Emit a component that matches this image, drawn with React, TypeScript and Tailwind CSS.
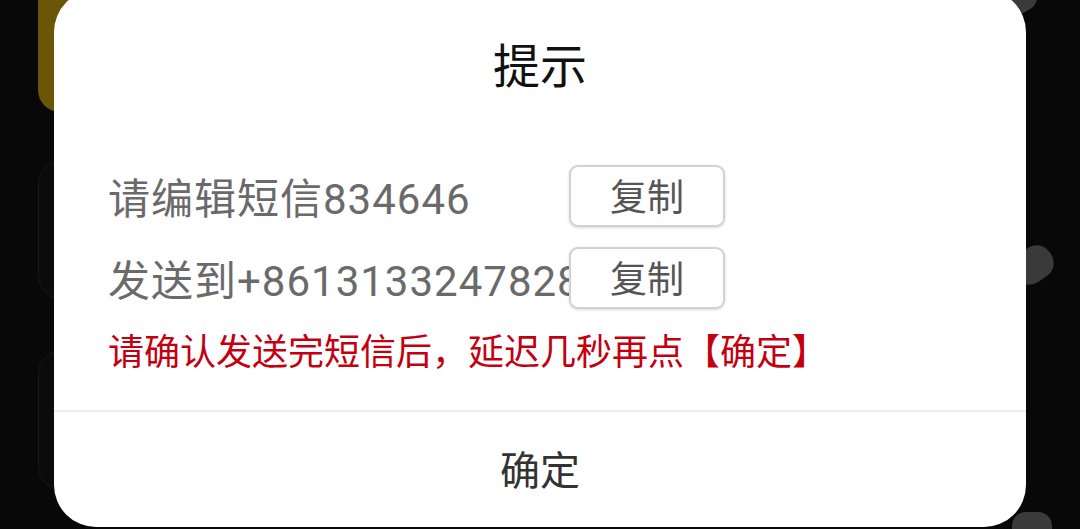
import { useState } from 'react'

const phone = '+8613133247828'
const code = '834646'

export default function App() {
  const [copied, setCopied] = useState<string | null>(null)

  const rows = [
    { label: `请编辑短信${code}`, value: code },
    { label: `发送到${phone}`, value: phone },
  ]

  return (
    <div
      className="relative w-[1080px] h-[529px] overflow-hidden bg-[#080808]"
      style={{ fontFamily: 'Roboto, "Noto Sans CJK SC", "Noto Sans", sans-serif' }}
    >
      {/* blurred app content behind the modal */}
      <div className="absolute left-[38px] top-[-40px] w-[200px] h-[152px] rounded-[22px] bg-[#6b5607]" />
      <div className="absolute left-[38px] top-[160px] w-[200px] h-[140px] rounded-[24px] border border-[#181818] bg-[#0b0b0b]" />
      <div className="absolute left-[38px] top-[350px] w-[200px] h-[140px] rounded-[24px] border border-[#181818] bg-[#0b0b0b]" />
      <div className="absolute left-[990px] top-[-14px] w-[48px] h-[30px] rounded-[14px] bg-[#3a3a3a] rotate-[-30deg]" />
      <div className="absolute left-[1012px] top-[248px] w-[42px] h-[34px] rounded-[16px] bg-[#3a3a3a] rotate-[-35deg]" />
      <div className="absolute left-[1012px] top-[512px] w-[40px] h-[30px] rounded-[14px] bg-[#3a3a3a]" />

      {/* dialog */}
      <div className="absolute left-[54px] top-[-10px] w-[972px] h-[537px] rounded-[42px] bg-white flex flex-col">
        <div className="pt-[49px] text-center text-[47px] leading-[56px] text-[#111111]">提示</div>

        <div className="mt-[70px] pl-[54px] flex flex-col gap-[20px]">
          {rows.map((row) => (
            <div key={row.value} className="flex items-center">
              {/* long number runs under the button, like the app does */}
              <div className="w-[461px] h-[62px] whitespace-nowrap text-[42px] tracking-[1px] leading-[70px] text-[#6a6a6a]">
                {row.label}
              </div>
              <button
                onClick={() => setCopied(row.value)}
                className="relative z-10 w-[156px] h-[62px] pt-[5px] rounded-[9px] border-2 border-[#d2d2d2] bg-white shadow-[0_1px_3px_rgba(0,0,0,0.15)] text-[37px] leading-none text-[#555555]"
              >
                {copied === row.value ? '复制' : '复制'}
              </button>
            </div>
          ))}
        </div>

        <div className="mt-[22px] pl-[54px] text-[36px] leading-[44px] text-[#c40010] whitespace-nowrap">
          请确认发送完短信后，延迟几秒再点【确定】
        </div>

        <div className="mt-[35px] h-[2px] bg-[#eeeeee]" />

        <button className="flex-1 pt-[4px] flex items-center justify-center text-[40px] text-[#333333]">确定</button>
      </div>
    </div>
  )
}
